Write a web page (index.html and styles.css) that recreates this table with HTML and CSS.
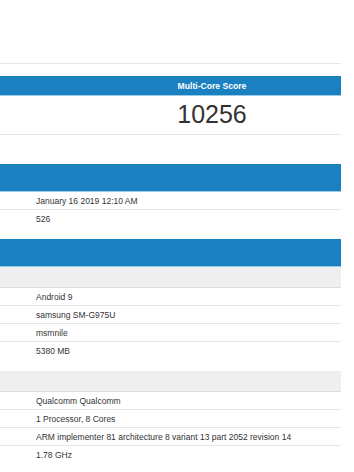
FILE: index.html
```html
<!DOCTYPE html>
<html lang="en">
<head>
    <meta charset="UTF-8">
    <meta name="viewport" content="width=device-width, initial-scale=1.0">
    <title>Geekbench Result</title>
    <link rel="stylesheet" href="styles.css">
</head>
<body>
    <div class="page">
        <div class="page-top"></div>

        <div class="scores">
            <div class="scores-head">
                <div></div>
                <div>Multi-Core Score</div>
            </div>
            <div class="scores-row">
                <div></div>
                <div class="score">10256</div>
            </div>
        </div>

        <div class="section section-first">
            <div class="section-head"></div>
            <div class="row"><div class="value">January 16 2019 12:10 AM</div></div>
            <div class="row"><div class="value">526</div></div>
        </div>

        <div class="section">
            <div class="section-head"></div>
            <div class="sub-head"></div>
            <div class="row"><div class="value">Android 9</div></div>
            <div class="row"><div class="value">samsung SM-G975U</div></div>
            <div class="row"><div class="value">msmnile</div></div>
            <div class="row"><div class="value">5380 MB</div></div>
        </div>

        <div class="section">
            <div class="sub-head"></div>
            <div class="row"><div class="value">Qualcomm Qualcomm</div></div>
            <div class="row"><div class="value">1 Processor, 8 Cores</div></div>
            <div class="row"><div class="value">ARM implementer 81 architecture 8 variant 13 part 2052 revision 14</div></div>
            <div class="row"><div class="value">1.78 GHz</div></div>
        </div>
    </div>
</body>
</html>
```

FILE: styles.css
```css
* {
    margin: 0;
    padding: 0;
    box-sizing: border-box;
}

:root {
    --blue: #1b80c0;
    --line: #e6e6e6;
    --band: #efefef;
    --text: #333333;
}

body {
    background: #fff;
    font-family: "Liberation Sans", Arial, sans-serif;
    color: var(--text);
}

.page {
    width: 341px;
}

.page-top {
    height: 64px;
    border-bottom: 1px solid var(--line);
}

.scores {
    margin-top: 12px;
}

.scores-head,
.scores-row {
    display: grid;
    grid-template-columns: 83px 1fr;
}

.scores-head {
    height: 20px;
    background: var(--blue);
    border-bottom: 1px solid #9ccbe8;
    color: #fff;
    font-size: 8.6px;
    font-weight: 700;
    align-items: center;
    text-align: center;
}

.scores-row {
    height: 39px;
    border-bottom: 1px solid var(--line);
    align-items: center;
    text-align: center;
}

.score {
    font-size: 25px;
    color: #333;
    padding-bottom: 2px;
}

.section {
    margin-top: 11px;
}

.section-first {
    margin-top: 29px;
}

.section-head {
    height: 28px;
    background: var(--blue);
    border-bottom: 1px solid #9ccbe8;
}

.sub-head {
    height: 21px;
    background: var(--band);
    border-bottom: 1px solid #dcdcdc;
}

.row {
    height: 18px;
    border-bottom: 1px solid var(--line);
    display: flex;
    align-items: center;
    padding-left: 36px;
    font-size: 8.5px;
    white-space: nowrap;
}

.row:last-child {
    border-bottom: none;
}
```
